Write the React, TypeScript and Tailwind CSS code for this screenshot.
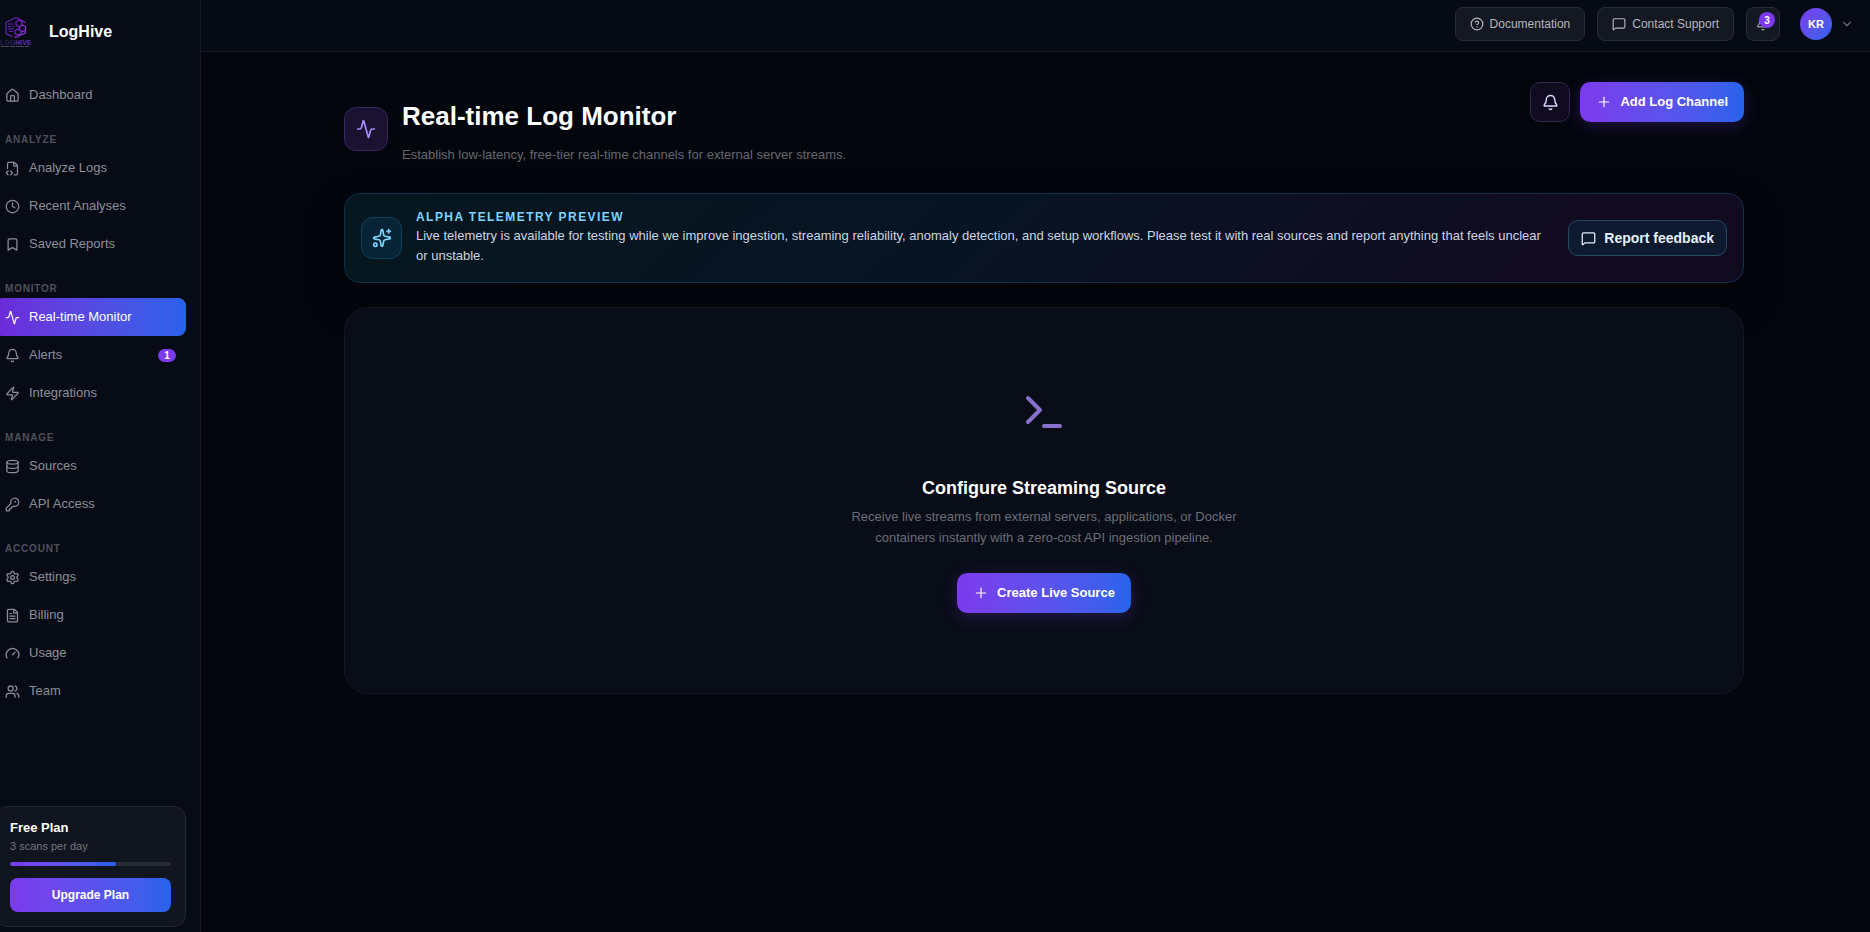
import type { ReactNode } from 'react';
import {
  Activity,
  Bell,
  Bookmark,
  ChevronDown,
  CircleHelp,
  Clock,
  Database,
  FileCode2,
  FileText,
  Gauge,
  House,
  KeyRound,
  MessageSquare,
  Plus,
  Settings,
  Sparkles,
  Terminal,
  Users,
  Zap,
} from 'lucide-react';
import type { LucideIcon } from 'lucide-react';

type NavItem = {
  label: string;
  icon: LucideIcon;
  active?: boolean;
  badge?: number;
};

type NavSection = {
  title: string;
  items: NavItem[];
};

const NAV_SECTIONS: NavSection[] = [
  { title: '', items: [{ label: 'Dashboard', icon: House }] },
  {
    title: 'Analyze',
    items: [
      { label: 'Analyze Logs', icon: FileCode2 },
      { label: 'Recent Analyses', icon: Clock },
      { label: 'Saved Reports', icon: Bookmark },
    ],
  },
  {
    title: 'Monitor',
    items: [
      { label: 'Real-time Monitor', icon: Activity, active: true },
      { label: 'Alerts', icon: Bell, badge: 1 },
      { label: 'Integrations', icon: Zap },
    ],
  },
  {
    title: 'Manage',
    items: [
      { label: 'Sources', icon: Database },
      { label: 'API Access', icon: KeyRound },
    ],
  },
  {
    title: 'Account',
    items: [
      { label: 'Settings', icon: Settings },
      { label: 'Billing', icon: FileText },
      { label: 'Usage', icon: Gauge },
      { label: 'Team', icon: Users },
    ],
  },
];

function Logo() {
  return (
    <svg viewBox="0 0 32 32" className="h-8 w-8 shrink-0" fill="none" aria-hidden="true">
      <defs>
        <linearGradient id="logo-stroke" x1="5" y1="4" x2="26" y2="16" gradientUnits="userSpaceOnUse">
          <stop offset="0" stopColor="#46298f" />
          <stop offset="0.6" stopColor="#7e22ce" />
          <stop offset="1" stopColor="#8b3ae0" />
        </linearGradient>
      </defs>
      <g stroke="url(#logo-stroke)" strokeWidth="1.2" strokeLinejoin="round">
        <path d="M12 20.500 6 17.500V6.500L16 1.500l9.500 5M25.500 15v2L18 20.500l-2 1-1.500-1" />
        <path d="m19 4 3 1.700v3.300l-3 1.700-3-1.700V5.700zM22.500 9l3 1.700v3.300l-3 1.700-3-1.700v-3.300zM18 13l3 1.700v2.800l-3 1.700-3-1.700v-2.800z" />
        <path d="M8 8h5.500M8 10.500h3M12.500 10.500h2M8 13h6M9 15.500h4" />
      </g>
      <text x="0" y="28.500" fontSize="7" fontWeight="700" fill="#2a2350">
        LOG<tspan fill="#5b2bb5">HIVE</tspan>
      </text>
      <path d="M1 30.500h28" stroke="#4b4b5c" strokeWidth="1" strokeDasharray="8 1 5 1" />
    </svg>
  );
}

function NavLink({ item }: { item: NavItem }) {
  const Icon = item.icon;

  return (
    <a
      href="#"
      aria-current={item.active ? 'page' : undefined}
      className={`-ml-[5px] flex h-[38px] items-center gap-[9px] rounded-lg px-2.5 text-[13px] ${
        item.active
          ? 'bg-linear-to-r from-[#6d28d9] to-[#2563eb] text-white'
          : 'text-[#8d8f96] hover:text-white'
      }`}
    >
      <Icon className="h-[15px] w-[15px] shrink-0" />
      <span className="flex-1">{item.label}</span>
      {item.badge ? (
        <span className="flex h-[13px] w-[18px] items-center justify-center rounded-full bg-[#7c3aed] text-[10px] font-bold text-white">
          {item.badge}
        </span>
      ) : null}
    </a>
  );
}

function Sidebar() {
  return (
    <aside className="flex w-[201px] shrink-0 flex-col overflow-hidden border-r border-[#171b26] bg-[#070b16] pr-3.5">
      <div className="flex items-center gap-[17px] pt-4">
        <Logo />
        <span className="text-base font-bold text-white">LogHive</span>
      </div>

      <nav className="mt-7">
        {NAV_SECTIONS.map((section) => (
          <div key={section.title}>
            {section.title ? (
              <h2 className="pt-[18px] pb-0.5 pl-[5px] text-[10px] leading-[15px] font-bold tracking-[0.08em] text-[#4e5159] uppercase">
                {section.title}
              </h2>
            ) : null}
            {section.items.map((item) => (
              <NavLink key={item.label} item={item} />
            ))}
          </div>
        ))}
      </nav>

      <div className="mt-auto mb-[5px] -ml-[5px] rounded-xl border border-[#22262f] bg-[#11151f] px-3.5 pt-[13px] pb-3.5">
        <p className="text-[13px] leading-4 font-bold text-white">Free Plan</p>
        <p className="mt-0.5 text-[11px] leading-4 text-[#73767d]">3 scans per day</p>
        <div className="mt-2 h-1 overflow-hidden rounded-full bg-[#282c35]">
          <div className="h-full rounded-full bg-linear-to-r from-[#7c3aed] to-[#2563eb]" style={{ width: '66%' }} />
        </div>
        <button
          type="button"
          className="mt-3 h-[34px] w-full rounded-lg bg-linear-to-r from-[#7c3aed] to-[#2563eb] text-xs font-bold text-white"
        >
          Upgrade Plan
        </button>
      </div>
    </aside>
  );
}

function HeaderButton({ icon: Icon, children }: { icon: LucideIcon; children: ReactNode }) {
  return (
    <button
      type="button"
      className="flex h-[34px] items-center gap-1.5 rounded-lg border border-[#292d36] bg-[#141822] px-3.5 text-xs text-[#b4b6ba]"
    >
      <Icon className="h-3.5 w-3.5" />
      {children}
    </button>
  );
}

function Header() {
  return (
    <header className="flex h-[52px] items-center justify-end gap-3 border-b border-[#171b24] bg-[#060a14] pr-4 pb-[3px]">
      <HeaderButton icon={CircleHelp}>Documentation</HeaderButton>
      <HeaderButton icon={MessageSquare}>Contact Support</HeaderButton>
      <button
        type="button"
        aria-label="Notifications"
        className="relative flex h-[34px] w-[34px] items-center justify-center rounded-lg border border-[#292d36] bg-[#141822] text-[#a7a9ae]"
      >
        <Bell className="h-3.5 w-3.5" />
        <span className="absolute top-1 right-1 flex h-4 w-4 items-center justify-center rounded-full bg-[#7c3aed] text-[10px] font-bold text-white">
          3
        </span>
      </button>
      <button type="button" aria-label="Account menu" className="ml-2 flex items-center gap-2 text-[#6b6e76]">
        <span className="flex h-8 w-8 items-center justify-center rounded-full bg-linear-to-br from-[#7c3aed] to-[#2563eb] text-[11px] font-bold text-white">
          KR
        </span>
        <ChevronDown className="h-3.5 w-3.5" />
      </button>
    </header>
  );
}

function PrimaryButton({ children }: { children: ReactNode }) {
  return (
    <button
      type="button"
      className="flex h-10 items-center gap-2 rounded-[10px] bg-linear-to-r from-[#7c3aed] to-[#2563eb] px-4 text-[13px] font-bold text-white shadow-[0_4px_16px_rgba(124,58,237,0.25)]"
    >
      <Plus className="h-4 w-4" strokeWidth={1.75} />
      {children}
    </button>
  );
}

function PageTitle() {
  return (
    <div className="flex items-start justify-between">
      <div className="flex items-start gap-3.5 pt-4">
        <div className="mt-[9px] flex h-11 w-11 items-center justify-center rounded-xl border border-[#38265f] bg-[#1a1230] text-[#a78bfa]">
          <Activity className="h-5 w-5" />
        </div>
        <div>
          <h1 className="text-[26px] leading-9 font-bold text-white">Real-time Log Monitor</h1>
          <p className="mt-[11px] text-[13px] leading-5 text-[#66686d]">
            Establish low-latency, free-tier real-time channels for external server streams.
          </p>
        </div>
      </div>

      <div className="flex gap-2.5">
        <button
          type="button"
          aria-label="Alert settings"
          className="flex h-10 w-10 items-center justify-center rounded-[10px] border border-[#34274f] bg-[#110b20] text-[#ddd6fe]"
        >
          <Bell className="h-[17px] w-[17px]" />
        </button>
        <PrimaryButton>Add Log Channel</PrimaryButton>
      </div>
    </div>
  );
}

function PreviewBanner() {
  return (
    <section className="flex items-center rounded-2xl border border-[#0e3049] bg-[linear-gradient(135deg,#06171f_0%,#081424_45%,#110b20_85%,#110b20_100%)] p-4 shadow-[0_18px_40px_rgba(8,6,6,0.4)]">
      <div className="flex h-[42px] w-[41px] shrink-0 items-center justify-center rounded-xl border border-[#0c415c] bg-[#072436] text-[#7dd3fc]">
        <Sparkles className="h-5 w-5" />
      </div>
      <div className="ml-3.5 flex-1">
        <p className="mb-0.5 text-xs leading-[14px] font-bold tracking-[0.12em] text-[#7dd3fc] uppercase">
          Alpha Telemetry Preview
        </p>
        <p className="text-[13px] leading-5 text-[#cbd5e1]">
          Live telemetry is available for testing while we improve ingestion, streaming reliability, anomaly detection,
          and setup workflows. Please test it with real sources and report anything that feels unclear or unstable.
        </p>
      </div>
      <button
        type="button"
        className="ml-5 flex h-9 shrink-0 items-center gap-2 rounded-[10px] border border-[#264863] bg-[#0e1a30] px-3 text-sm font-bold text-[#e0f2fe]"
      >
        <MessageSquare className="h-[15px] w-[15px]" />
        Report feedback
      </button>
    </section>
  );
}

function EmptyState() {
  return (
    <section className="mt-6 flex flex-col items-center rounded-3xl border border-[#141822] bg-[#090d18] px-6 py-20 text-center">
      <Terminal className="h-12 w-12 text-[#8870cf]" />
      <h2 className="mt-10 text-lg leading-6 font-bold text-white">Configure Streaming Source</h2>
      <p className="mt-1.5 max-w-[400px] text-[13px] leading-[21px] text-[#6b6e75]">
        Receive live streams from external servers, applications, or Docker containers instantly with a zero-cost API
        ingestion pipeline.
      </p>
      <div className="mt-[25px]">
        <PrimaryButton>Create Live Source</PrimaryButton>
      </div>
    </section>
  );
}

export default function App() {
  return (
    <div className="flex min-h-screen bg-[#03060d] font-['Liberation_Sans',Arial,sans-serif]">
      <Sidebar />
      <div className="flex min-w-0 flex-1 flex-col">
        <Header />
        <main className="flex-1 pt-[30px] pr-4 pb-8 pl-[33px]">
          <div className="mx-auto max-w-[1400px]">
            <PageTitle />
            <div className="mt-7">
              <PreviewBanner />
            </div>
            <EmptyState />
          </div>
        </main>
      </div>
    </div>
  );
}
